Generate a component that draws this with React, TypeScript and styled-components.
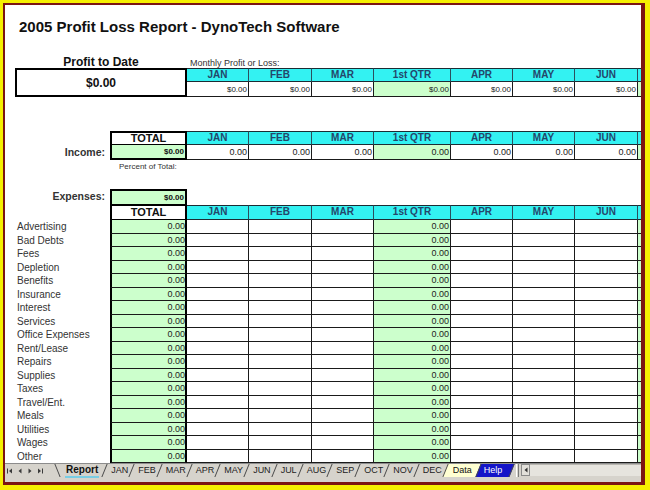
import React from "react";
import styled, { createGlobalStyle } from "styled-components";

const FONT = `"Liberation Sans", Arial, sans-serif`;
const COLS = "95px 77px 62px 63px 62px 77px 62px 62px 63px 77px";

const GlobalStyle = createGlobalStyle`
  html, body { margin: 0; padding: 0; background: #f6f000; }
  body { font-family: ${FONT}; }
  * { box-sizing: border-box; }
`;

const Frame = styled.div`
  width: 650px;
  height: 490px;
  background: #f6f000;
  padding: 3px 5px 5px 3px;
`;

const Window = styled.div`
  height: 100%;
  border-style: solid;
  border-color: #7c1512;
  border-width: 2px 4px 3px 2px;
  background: #fff;
  display: flex;
  flex-direction: column;
  overflow: hidden;
`;

const Sheet = styled.div`
  flex: 1;
  min-height: 0;
  overflow: hidden;
  padding: 14px 0 0 10px;
`;

const Title = styled.h1`
  margin: 0 0 0 4px;
  font: bold 15px/15px ${FONT};
  color: #111;
  white-space: nowrap;
`;

const Block = styled.div<{ $rows: string; $mt: number }>`
  display: grid;
  grid-template-columns: ${COLS};
  grid-template-rows: ${(p) => p.$rows};
  margin-top: ${(p) => p.$mt}px;
`;

const ProfitCaption = styled.div`
  grid-column: 1 / span 2;
  text-align: center;
  padding-top: 1px;
  font: bold 12px/14px ${FONT};
  color: #111;
`;

const MonthlyCaption = styled.div`
  grid-column: 3 / span 4;
  padding: 2px 0 0 3px;
  font: 9px/14px ${FONT};
  color: #333;
  white-space: nowrap;
`;

const ProfitBox = styled.div`
  grid-column: 1 / span 2;
  grid-row: 1 / span 2;
  border: 2px solid #000;
  display: flex;
  align-items: center;
  justify-content: center;
  font: bold 12px/1 ${FONT};
  color: #111;
`;

const MonthHeader = styled.div`
  background: #33f2f2;
  border-top: 1px solid #1c2c34;
  border-bottom: 1px solid #1c2c34;
  border-right: 1px solid #2b4f5e;
  display: flex;
  align-items: center;
  justify-content: center;
  font: bold 10px/1 ${FONT};
  color: #24476b;
  white-space: nowrap;
`;

const DataCell = styled.div<{ $green?: boolean; $size?: number }>`
  background: ${(p) => (p.$green ? "#ccffcc" : "#fff")};
  border-right: 1px solid #1a1a1a;
  border-bottom: 1px solid #1a1a1a;
  display: flex;
  align-items: center;
  justify-content: flex-end;
  padding: 1px 1px 0 0;
  font: ${(p) => p.$size ?? 9}px/1 ${FONT};
  color: #222;
`;

const TotalHeader = styled.div<{ $bw: string }>`
  background: #fff;
  border-style: solid;
  border-color: #000;
  border-width: ${(p) => p.$bw};
  display: flex;
  align-items: center;
  justify-content: center;
  font: bold 11px/1 ${FONT};
  color: #111;
`;

const TotalBox = styled.div<{ $bw: string }>`
  background: #ccffcc;
  border-style: solid;
  border-color: #000;
  border-width: ${(p) => p.$bw};
  display: flex;
  align-items: center;
  justify-content: flex-end;
  padding: 1px 1px 0 0;
  font: bold 8px/1 ${FONT};
  color: #111;
`;

const TotalCell = styled.div`
  background: #ccffcc;
  border-left: 2px solid #000;
  border-right: 2px solid #000;
  border-bottom: 1px solid #1a1a1a;
  display: flex;
  align-items: center;
  justify-content: flex-end;
  padding: 1px 0 0 0;
  font: 9px/1 ${FONT};
  color: #222;
`;

const RowLabel = styled.div`
  display: flex;
  align-items: center;
  justify-content: flex-end;
  padding-right: 5px;
  font: bold 10.5px/1 ${FONT};
  color: #333;
`;

const ItemLabel = styled.div`
  display: flex;
  align-items: center;
  padding: 1px 0 0 2px;
  font: 10px/1 ${FONT};
  color: #333;
  white-space: nowrap;
`;

const Note = styled.div`
  padding-left: 9px;
  font: 8px/13px ${FONT};
  color: #333;
  white-space: nowrap;
`;

const Blank = styled.div<{ $span?: number }>`
  grid-column: span ${(p) => p.$span ?? 1};
`;

/* ---------- sheet tab bar ---------- */

const TabBar = styled.div`
  flex: none;
  height: 19px;
  background: #d6d3cc;
  border-top: 1px solid #8c8c8c;
  display: flex;
  align-items: flex-start;
`;

const Nav = styled.div`
  display: flex;
  align-items: center;
  width: 52px;
  height: 13px;
  flex: none;
`;

const NavButton = styled.span`
  width: 10px;
  display: flex;
  justify-content: center;
  color: #3a3a3a;
`;

const Tabs = styled.div`
  display: flex;
  height: 13px;
  flex: none;
`;

const Tab = styled.div<{ $bg?: string; $color?: string; $closing?: boolean; $pad?: string }>`
  position: relative;
  z-index: 0;
  display: flex;
  align-items: center;
  height: 13px;
  padding: ${(p) => p.$pad ?? "0 3px 0 7px"};
  font: 9px/1 ${FONT};
  color: ${(p) => p.$color ?? "#222"};
  white-space: nowrap;
  &::before {
    content: "";
    position: absolute;
    inset: 0 0 0 0;
    z-index: -1;
    background: ${(p) => p.$bg ?? "transparent"};
    border-left: 1px solid #4a4a4a;
    border-right: ${(p) => (p.$closing ? "1px solid #4a4a4a" : "0")};
    transform: skewX(-22deg);
  }
`;

const ActiveTab = styled.div`
  position: relative;
  display: flex;
  align-items: center;
  height: 13px;
  padding: 0 5px 0 8px;
  font: bold 10px/1 ${FONT};
  color: #111;
  &::before {
    content: "";
    position: absolute;
    top: 0;
    bottom: 0;
    left: 0;
    border-left: 1px solid #4a4a4a;
    transform: skewX(22deg);
  }
`;

const ActiveLabel = styled.span`
  border-bottom: 2px solid #78cde4;
  padding: 0 1px 1px;
  margin-top: 2px;
`;

const Splitter = styled.div`
  width: 3px;
  height: 13px;
  margin-left: 5px;
  border-left: 1px solid #fff;
  border-right: 1px solid #7a7a7a;
  flex: none;
`;

const ScrollButton = styled.div`
  width: 9px;
  height: 12px;
  margin-left: 2px;
  border: 1px solid #8a8a8a;
  background: #e2e0da;
  display: flex;
  align-items: center;
  justify-content: center;
  color: #333;
  flex: none;
`;

const Track = styled.div`
  flex: 1;
  height: 12px;
  background: #e6e4de;
  border-top: 1px solid #b8b6b0;
`;

const Tri = ({ dir, bar }: { dir: "l" | "r"; bar?: boolean }) => (
  <svg width="6" height="6" viewBox="0 0 6 6" fill="currentColor">
    {dir === "l" ? (
      <>
        {bar && <rect x="0" y="0.5" width="1" height="5" />}
        <path d={bar ? "M5 0.5 L2 3 L5 5.5Z" : "M4.5 0.5 L1.5 3 L4.5 5.5Z"} />
      </>
    ) : (
      <>
        <path d={bar ? "M1 0.5 L4 3 L1 5.5Z" : "M1.5 0.5 L4.5 3 L1.5 5.5Z"} />
        {bar && <rect x="5" y="0.5" width="1" height="5" />}
      </>
    )}
  </svg>
);

type Col = { key: string; label: string; green: boolean; clipped?: boolean };
const COLUMNS: Col[] = [
  { key: "jan", label: "JAN", green: false },
  { key: "feb", label: "FEB", green: false },
  { key: "mar", label: "MAR", green: false },
  { key: "q1", label: "1st QTR", green: true },
  { key: "apr", label: "APR", green: false },
  { key: "may", label: "MAY", green: false },
  { key: "jun", label: "JUN", green: false },
  { key: "q2", label: "", green: true, clipped: true },
];

const EXPENSES = [
  "Advertising",
  "Bad Debts",
  "Fees",
  "Depletion",
  "Benefits",
  "Insurance",
  "Interest",
  "Services",
  "Office Expenses",
  "Rent/Lease",
  "Repairs",
  "Supplies",
  "Taxes",
  "Travel/Ent.",
  "Meals",
  "Utilities",
  "Wages",
  "Other",
];

const MONTH_TABS = ["JAN", "FEB", "MAR", "APR", "MAY", "JUN", "JUL", "AUG", "SEP", "OCT", "NOV", "DEC"];

export default function App() {
  return (
    <>
      <GlobalStyle />
      <Frame>
        <Window>
          <Sheet>
            <Title>2005 Profit Loss Report - DynoTech Software</Title>

            <Block $rows="14px" $mt={20}>
              <ProfitCaption>Profit to Date</ProfitCaption>
              <MonthlyCaption>Monthly Profit or Loss:</MonthlyCaption>
            </Block>

            <Block $rows="14px 15px" $mt={0}>
              <ProfitBox>$0.00</ProfitBox>
              {COLUMNS.map((c) => (
                <MonthHeader key={c.key}>{c.label}</MonthHeader>
              ))}
              {COLUMNS.map((c) => (
                <DataCell key={c.key} $green={c.green} $size={8}>
                  {c.clipped ? "" : "$0.00"}
                </DataCell>
              ))}
            </Block>

            <Block $rows="13.5px 15px 29px" $mt={34}>
              <Blank />
              <TotalHeader $bw="2px 2px 1px 2px">TOTAL</TotalHeader>
              {COLUMNS.map((c) => (
                <MonthHeader key={c.key}>{c.label}</MonthHeader>
              ))}
              <RowLabel>Income:</RowLabel>
              <TotalBox $bw="0 2px 2px 2px">$0.00</TotalBox>
              {COLUMNS.map((c) => (
                <DataCell key={c.key} $green={c.green}>
                  {c.clipped ? "" : "0.00"}
                </DataCell>
              ))}
              <Blank />
              <Note>Percent of Total:</Note>
            </Block>

            <Block $rows="16px 15.5px repeat(18, 13.5px)" $mt={0}>
              <RowLabel>Expenses:</RowLabel>
              <TotalBox $bw="2px 2px 1px 2px">$0.00</TotalBox>
              <Blank $span={8} />
              <Blank />
              <TotalHeader $bw="1px 2px 1px 2px">TOTAL</TotalHeader>
              {COLUMNS.map((c) => (
                <MonthHeader key={c.key}>{c.label}</MonthHeader>
              ))}
              {EXPENSES.map((name) => (
                <React.Fragment key={name}>
                  <ItemLabel>{name}</ItemLabel>
                  <TotalCell>0.00</TotalCell>
                  {COLUMNS.map((c) => (
                    <DataCell key={c.key} $green={c.green}>
                      {c.key === "q1" ? "0.00" : ""}
                    </DataCell>
                  ))}
                </React.Fragment>
              ))}
            </Block>
          </Sheet>

          <TabBar>
            <Nav>
              <NavButton>
                <Tri dir="l" bar />
              </NavButton>
              <NavButton>
                <Tri dir="l" />
              </NavButton>
              <NavButton>
                <Tri dir="r" />
              </NavButton>
              <NavButton>
                <Tri dir="r" bar />
              </NavButton>
            </Nav>
            <Tabs>
              <ActiveTab>
                <ActiveLabel>Report</ActiveLabel>
              </ActiveTab>
              {MONTH_TABS.map((m) => (
                <Tab key={m}>{m}</Tab>
              ))}
              <Tab $bg="#ffffd2" $color="#111" $pad="0 6px 0 8px">
                Data
              </Tab>
              <Tab $bg="#1414c8" $color="#fff" $closing $pad="0 9px 0 6px">
                Help
              </Tab>
            </Tabs>
            <Splitter />
            <ScrollButton>
              <svg width="4" height="6" viewBox="0 0 4 6" fill="currentColor">
                <path d="M3.5 0.5 L0.5 3 L3.5 5.5Z" />
              </svg>
            </ScrollButton>
            <Track />
          </TabBar>
        </Window>
      </Frame>
    </>
  );
}
